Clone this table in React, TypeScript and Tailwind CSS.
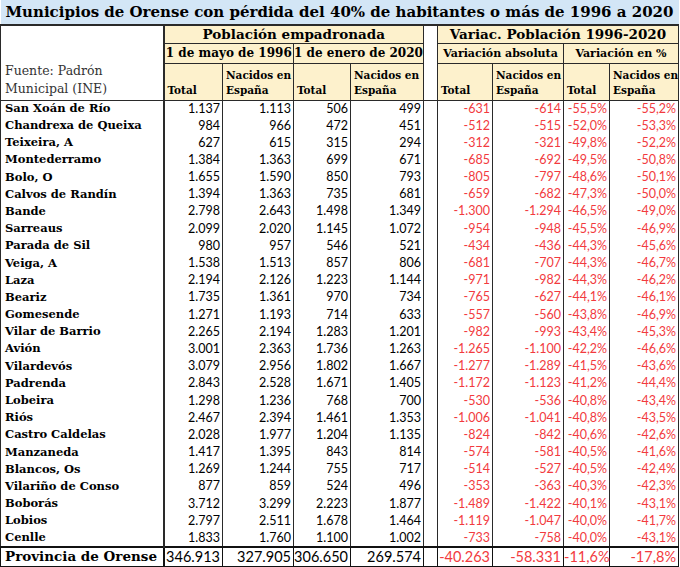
import React from "react";

type Row = [string, string, string, string, string, string, string, string, string];

const rows: Row[] = [
  ["San Xoán de Río", "1.137", "1.113", "506", "499", "-631", "-614", "-55,5%", "-55,2%"],
  ["Chandrexa de Queixa", "984", "966", "472", "451", "-512", "-515", "-52,0%", "-53,3%"],
  ["Teixeira, A", "627", "615", "315", "294", "-312", "-321", "-49,8%", "-52,2%"],
  ["Montederramo", "1.384", "1.363", "699", "671", "-685", "-692", "-49,5%", "-50,8%"],
  ["Bolo, O", "1.655", "1.590", "850", "793", "-805", "-797", "-48,6%", "-50,1%"],
  ["Calvos de Randín", "1.394", "1.363", "735", "681", "-659", "-682", "-47,3%", "-50,0%"],
  ["Bande", "2.798", "2.643", "1.498", "1.349", "-1.300", "-1.294", "-46,5%", "-49,0%"],
  ["Sarreaus", "2.099", "2.020", "1.145", "1.072", "-954", "-948", "-45,5%", "-46,9%"],
  ["Parada de Sil", "980", "957", "546", "521", "-434", "-436", "-44,3%", "-45,6%"],
  ["Veiga, A", "1.538", "1.513", "857", "806", "-681", "-707", "-44,3%", "-46,7%"],
  ["Laza", "2.194", "2.126", "1.223", "1.144", "-971", "-982", "-44,3%", "-46,2%"],
  ["Beariz", "1.735", "1.361", "970", "734", "-765", "-627", "-44,1%", "-46,1%"],
  ["Gomesende", "1.271", "1.193", "714", "633", "-557", "-560", "-43,8%", "-46,9%"],
  ["Vilar de Barrio", "2.265", "2.194", "1.283", "1.201", "-982", "-993", "-43,4%", "-45,3%"],
  ["Avión", "3.001", "2.363", "1.736", "1.263", "-1.265", "-1.100", "-42,2%", "-46,6%"],
  ["Vilardevós", "3.079", "2.956", "1.802", "1.667", "-1.277", "-1.289", "-41,5%", "-43,6%"],
  ["Padrenda", "2.843", "2.528", "1.671", "1.405", "-1.172", "-1.123", "-41,2%", "-44,4%"],
  ["Lobeira", "1.298", "1.236", "768", "700", "-530", "-536", "-40,8%", "-43,4%"],
  ["Riós", "2.467", "2.394", "1.461", "1.353", "-1.006", "-1.041", "-40,8%", "-43,5%"],
  ["Castro Caldelas", "2.028", "1.977", "1.204", "1.135", "-824", "-842", "-40,6%", "-42,6%"],
  ["Manzaneda", "1.417", "1.395", "843", "814", "-574", "-581", "-40,5%", "-41,6%"],
  ["Blancos, Os", "1.269", "1.244", "755", "717", "-514", "-527", "-40,5%", "-42,4%"],
  ["Vilariño de Conso", "877", "859", "524", "496", "-353", "-363", "-40,3%", "-42,3%"],
  ["Boborás", "3.712", "3.299", "2.223", "1.877", "-1.489", "-1.422", "-40,1%", "-43,1%"],
  ["Lobios", "2.797", "2.511", "1.678", "1.464", "-1.119", "-1.047", "-40,0%", "-41,7%"],
  ["Cenlle", "1.833", "1.760", "1.100", "1.002", "-733", "-758", "-40,0%", "-43,1%"],
];

const total: Row = ["Provincia de Orense", "346.913", "327.905", "306.650", "269.574", "-40.263", "-58.331", "-11,6%", "-17,8%"];

const serif = "font-['DejaVu_Serif',serif] font-bold";
const num = "font-['Lato',sans-serif] text-right pr-[2px]";
const line = "border border-[#2a2a2a]";
const head = `${line} bg-[#fdf1cc] ${serif} text-black`;

export default function App() {
  return (
    <div className="w-[680px] h-[567px] bg-white overflow-hidden">
      <table className="table-fixed border-collapse w-[678px] text-black">
        <colgroup>
          <col className="w-[163px]" />
          <col className="w-[59px]" />
          <col className="w-[71px]" />
          <col className="w-[57px]" />
          <col className="w-[73px]" />
          <col className="w-[14px]" />
          <col className="w-[55px]" />
          <col className="w-[71px]" />
          <col className="w-[46px]" />
          <col className="w-[69px]" />
        </colgroup>
        <thead>
          <tr className="h-[25px]">
            <th
              colSpan={10}
              className={`bg-[#d3e6f6] border-b-2 border-[#2a2a2a] ${serif} text-[15px] text-left pl-[5px] leading-none whitespace-nowrap`}
            >
              Municipios de Orense con pérdida del 40% de habitantes o más de 1996 a 2020
            </th>
          </tr>
          <tr className="h-[18px]">
            <th rowSpan={3} className={`${line} border-r-2 align-bottom text-left pl-[4px] pb-[2px] font-['DejaVu_Serif',serif] font-normal text-[12.5px] leading-[18px] text-[#333]`}>
              Fuente: Padrón
              <br />
              Municipal (INE)
            </th>
            <th colSpan={4} className={`${head} text-[13.5px] leading-none`}>
              Población empadronada
            </th>
            <th rowSpan={3} className={`${line} bg-white`} />
            <th colSpan={4} className={`${head} text-[13.5px] leading-none`}>
              Variac. Población 1996-2020
            </th>
          </tr>
          <tr className="h-[20px]">
            <th colSpan={2} className={`${head} text-[12px] leading-none whitespace-nowrap`}>1 de mayo de 1996</th>
            <th colSpan={2} className={`${head} text-[12px] leading-none whitespace-nowrap`}>1 de enero de 2020</th>
            <th colSpan={2} className={`${head} text-[11px] leading-none whitespace-nowrap`}>Variación absoluta</th>
            <th colSpan={2} className={`${head} text-[11px] leading-none whitespace-nowrap`}>Variación en %</th>
          </tr>
          <tr className="h-[37px]">
            {["Total", "Nacidos en España", "Total", "Nacidos en España", "Total", "Nacidos en España", "Total", "Nacidos en España"].map((t, i) => (
              <th key={i} className={`${head} text-[10.5px] leading-[15px] text-left align-bottom pl-[3px] pb-[2px]`}>
                {t === "Nacidos en España" ? (
                  <>
                    Nacidos en
                    <br />
                    España
                  </>
                ) : (
                  t
                )}
              </th>
            ))}
          </tr>
        </thead>
        <tbody>
          {rows.map((r) => (
            <tr key={r[0]} className="h-[17.2px] leading-none">
              <td className={`border-l border-r-2 border-[#2a2a2a] ${serif} text-[11.5px] pl-[4px] whitespace-nowrap`}>{r[0]}</td>
              {r.slice(1, 5).map((v, i) => (
                <td key={i} className={`border-x border-[#2a2a2a] ${num} text-[12.5px]`}>{v}</td>
              ))}
              <td className="border-x border-[#2a2a2a]" />
              {r.slice(5).map((v, i) => (
                <td key={i} className={`border-x border-[#2a2a2a] ${num} text-[12.5px] text-[#f23a3e]`}>{v}</td>
              ))}
            </tr>
          ))}
          <tr className="h-[20px] leading-none">
            <td className={`border-t-2 border-l border-r-2 border-b border-[#111] ${serif} text-[13.5px] pl-[4px] whitespace-nowrap overflow-hidden`}>{total[0]}</td>
            {total.slice(1, 5).map((v, i) => (
              <td key={i} className={`border-t-2 border-x border-b border-[#111] ${num} text-[14.5px]`}>{v}</td>
            ))}
            <td className="border-t-2 border-x border-b border-[#111]" />
            {total.slice(5).map((v, i) => (
              <td key={i} className={`border-t-2 border-x border-b border-[#111] ${num} text-[14.5px] text-[#f23a3e]`}>{v}</td>
            ))}
          </tr>
        </tbody>
      </table>
    </div>
  );
}
